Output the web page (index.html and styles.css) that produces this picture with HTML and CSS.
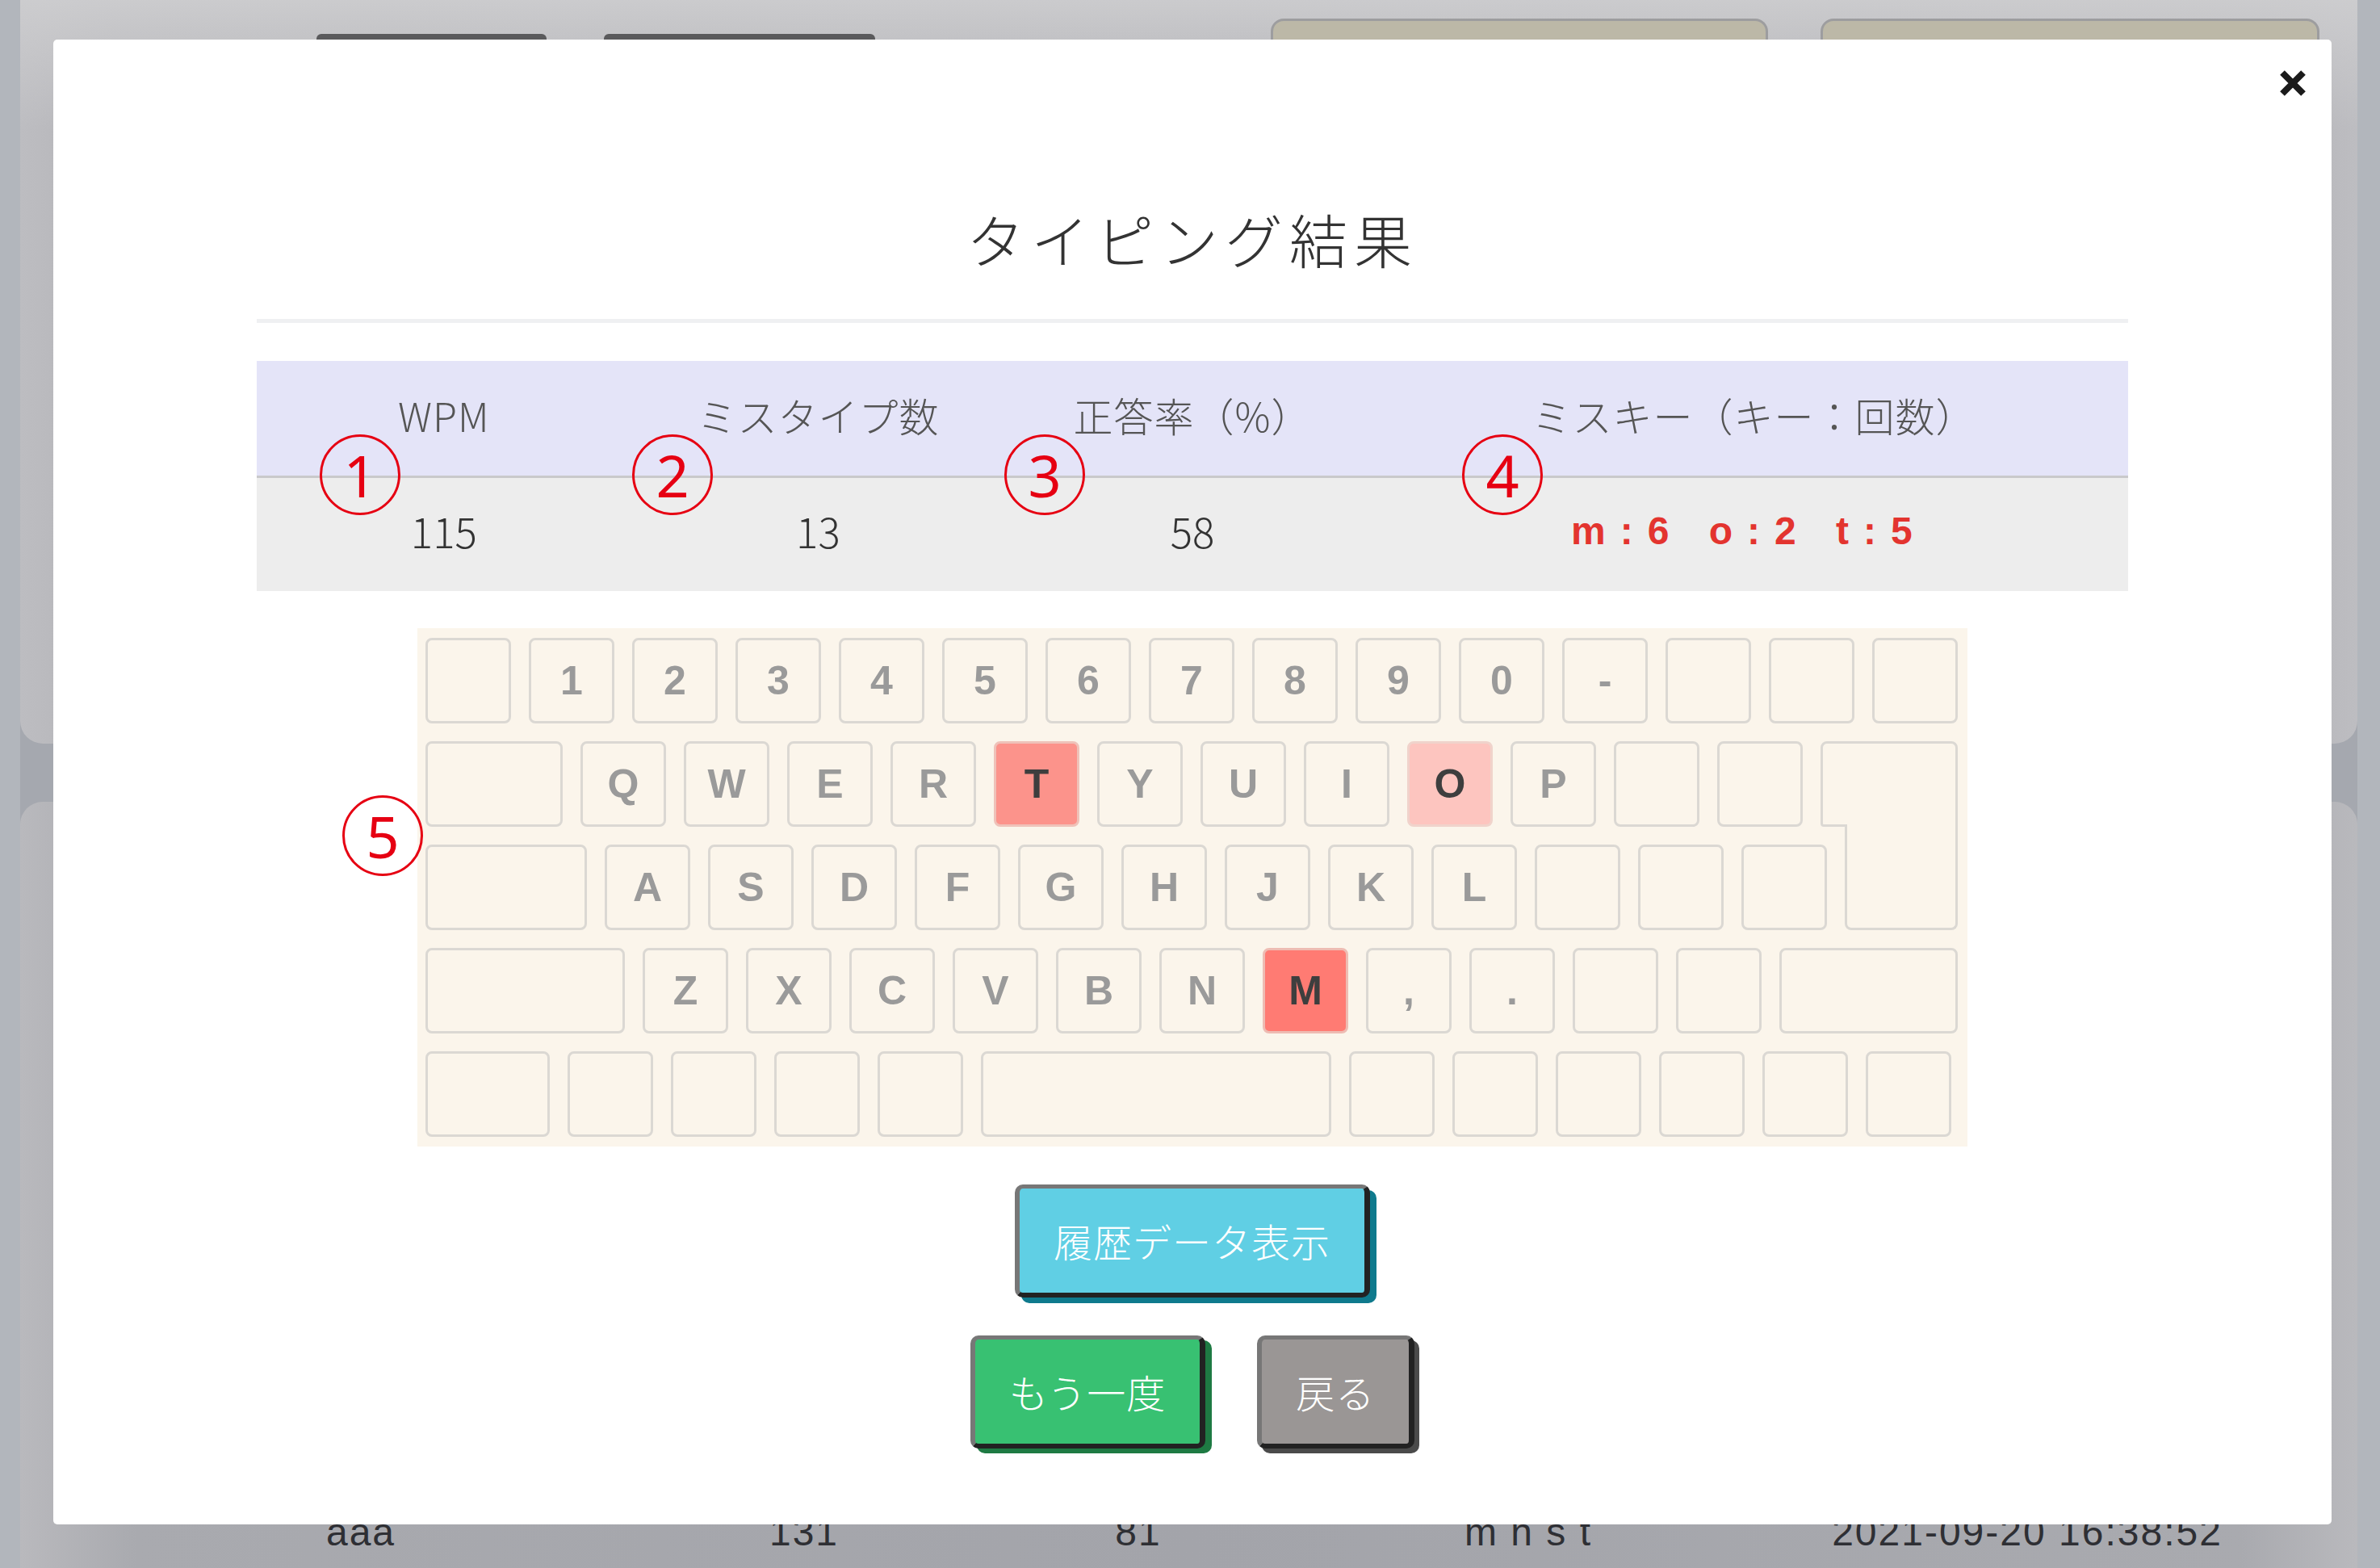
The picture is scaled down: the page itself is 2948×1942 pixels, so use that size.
FILE: index.html
```html
<!DOCTYPE html>
<html lang="ja">
<head>
<meta charset="utf-8">
<title>タイピング結果</title>
<link rel="stylesheet" href="styles.css">
</head>
<body>
<div class="page">
  <div class="card card-top">
    <div class="topbar">
      <span class="tb dark d1"></span>
      <span class="tb dark d2"></span>
      <span class="tb beige b1"></span>
      <span class="tb beige b2"></span>
    </div>
  </div>
  <div class="card card-bottom">
    <div class="hist-row">
      <span>aaa</span><span>131</span><span>81</span><span>m n s t</span><span>2021-09-20 16:38:52</span>
    </div>
  </div>
</div>

<div class="modal">
  <button class="close" aria-label="close">
    <svg width="36" height="36" viewBox="0 0 36 36"><path d="M5 5 L31 31 M31 5 L5 31" stroke="#1b1b1b" stroke-width="8" fill="none"/></svg>
  </button>

  <h1 class="title">タイピング結果</h1>
  <hr class="rule">

  <div class="stats">
    <div class="stats-head">
      <div>WPM</div>
      <div>ミスタイプ数</div>
      <div>正答率（%）</div>
      <div>ミスキー（キー：回数）</div>
    </div>
    <div class="stats-body">
      <div>115</div>
      <div>13</div>
      <div>58</div>
      <div class="miss">m:6 o:2 t:5</div>
    </div>
  </div>

  <div class="keyboard">
    <div class="kr">
      <span class="k"></span><span class="k">1</span><span class="k">2</span><span class="k">3</span><span class="k">4</span><span class="k">5</span><span class="k">6</span><span class="k">7</span><span class="k">8</span><span class="k">9</span><span class="k">0</span><span class="k">-</span><span class="k"></span><span class="k"></span><span class="k"></span>
    </div>
    <div class="kr">
      <span class="k tab"></span><span class="k">Q</span><span class="k">W</span><span class="k">E</span><span class="k">R</span><span class="k hl-t">T</span><span class="k">Y</span><span class="k">U</span><span class="k">I</span><span class="k hl-o">O</span><span class="k">P</span><span class="k"></span><span class="k"></span><span class="k enter-top"></span>
    </div>
    <div class="kr">
      <span class="k caps"></span><span class="k">A</span><span class="k">S</span><span class="k">D</span><span class="k">F</span><span class="k">G</span><span class="k">H</span><span class="k">J</span><span class="k">K</span><span class="k">L</span><span class="k"></span><span class="k"></span><span class="k"></span><span class="k enter-bot"></span>
    </div>
    <div class="kr">
      <span class="k lshift"></span><span class="k">Z</span><span class="k">X</span><span class="k">C</span><span class="k">V</span><span class="k">B</span><span class="k">N</span><span class="k hl-m">M</span><span class="k">,</span><span class="k">.</span><span class="k"></span><span class="k"></span><span class="k rshift"></span>
    </div>
    <div class="kr">
      <span class="k ctrl"></span><span class="k"></span><span class="k"></span><span class="k"></span><span class="k"></span><span class="k space"></span><span class="k"></span><span class="k"></span><span class="k"></span><span class="k"></span><span class="k"></span><span class="k"></span>
    </div>
  </div>

  <div class="actions">
    <button class="btn btn-info">履歴データ表示</button>
    <div class="btn-row">
      <button class="btn btn-success">もう一度</button>
      <button class="btn btn-back">戻る</button>
    </div>
  </div>

  <span class="mark m1">1</span>
  <span class="mark m2">2</span>
  <span class="mark m3">3</span>
  <span class="mark m4">4</span>
  <span class="mark m5">5</span>
</div>
</body>
</html>
```

FILE: styles.css
```css
* { box-sizing: border-box; }
html, body { margin: 0; padding: 0; }
body {
  width: 2948px;
  height: 1942px;
  overflow: hidden;
  position: relative;
  font-family: "Noto Sans CJK JP", "Noto Sans", sans-serif;
  background: #a6a9b0;
}

/* ---------- dimmed page behind the modal ---------- */
.page {
  height: 1942px;
  padding: 0 28px 0 25px;
  display: flex;
  flex-direction: column;
  gap: 72px;
  background: linear-gradient(90deg, #b2b6bc 0, #b2b6bc 25px, #a5a8af 25px, #a5a8af 2920px, #b2b6bc 2920px);
}
.card-top {
  height: 921px;
  border-radius: 0 0 28px 28px;
  background:
    linear-gradient(180deg, rgba(206,206,208,.9) 0, rgba(206,206,208,0) 160px),
    linear-gradient(90deg, #bdbdc1 0, #b3b3b7 4%, #aeaeb3 50%, #b3b3b7 96%, #bdbdc1 100%);
}
.card-bottom {
  flex: 1;
  border-radius: 28px 28px 0 0;
  padding-top: 875px;
  background: linear-gradient(90deg, #b9b9bd 0, #a9aaaf 5%, #a3a4aa 50%, #a9aaaf 95%, #b9b9bd 100%);
}
.topbar {
  display: flex;
  align-items: flex-start;
}
.tb { display: block; height: 60px; flex: none; }
.dark { background: #5a5a5c; border-radius: 6px 6px 0 0; margin-top: 42px; }
.d1 { width: 285px; margin-left: 367px; }
.d2 { width: 336px; margin-left: 71px; }
.beige {
  background: #bcb8a7;
  border: 3px solid #9d9d9f;
  border-bottom: none;
  border-radius: 16px 16px 0 0;
  margin-top: 23px;
}
.b1 { width: 616px; margin-left: 490px; }
.b2 { width: 618px; margin-left: 65px; }

.hist-row {
  display: grid;
  grid-template-columns: 844px 254px 574px 392px 844px;
  font: 48px/60px "Liberation Sans", Arial, sans-serif;
  letter-spacing: 2px;
  color: #2e2f34;
  text-align: center;
}

/* ---------- modal ---------- */
.modal {
  position: fixed;
  left: 66px;
  top: 49px;
  width: 2822px;
  height: 1839px;
  background: #fff;
  border-radius: 5px;
  padding: 200px 252px 0;
}
.close {
  position: absolute;
  top: 36px;
  right: 30px;
  width: 36px;
  height: 36px;
  padding: 0;
  border: none;
  background: transparent;
  display: block;
}
.close svg { display: block; }

.title {
  margin: 0;
  text-align: center;
  font-size: 72px;
  line-height: 92px;
  font-weight: 300;
  letter-spacing: 8px;
  color: #333;
}
.rule {
  border: none;
  height: 5px;
  background: #eff0f2;
  margin: 54px 0 47px;
}

.stats { width: 100%; }
.stats-head, .stats-body {
  display: grid;
  grid-template-columns: 1fr 1fr 1fr 2fr;
  align-items: center;
  text-align: center;
}
.stats-head {
  height: 145px;
  padding-bottom: 10px;
  background: #e4e4f8;
  border-bottom: 3px solid #c9c9cb;
  font-size: 49px;
  font-weight: 300;
  letter-spacing: 1px;
  color: #555;
}
.stats-body {
  height: 140px;
  padding-bottom: 10px;
  background: #ededed;
  font-size: 51px;
  font-weight: 300;
  color: #333;
}
.miss {
  font: bold 48px "Liberation Sans", Arial, sans-serif;
  letter-spacing: 18px;
  color: #e3342f;
  padding-right: 12px;
}

/* ---------- keyboard ---------- */
.keyboard {
  width: 1920px;
  margin: 46px auto 0;
  padding: 12px 11px 12px 10px;
  background: #fbf5eb;
  display: flex;
  flex-direction: column;
  gap: 22px;
}
.kr {
  display: flex;
  gap: 22px;
  align-items: flex-start;
}
.k {
  flex: none;
  width: 106px;
  height: 106px;
  border: 3px solid #dbd8d3;
  border-radius: 8px;
  background: #fbf5eb;
  display: flex;
  align-items: center;
  justify-content: center;
  font: bold 50px/1 "Liberation Sans", Arial, sans-serif;
  color: #9a9a9a;
}
.tab { width: 170px; }
.caps { width: 200px; }
.lshift { width: 247px; }
.rshift { width: 221px; }
.ctrl { width: 154px; }
.space { width: 434px; }
.enter-top {
  width: 170px;
  border-radius: 8px 8px 0 4px;
}
.enter-bot {
  width: 140px;
  height: 131px;
  margin-top: -25px;
  border-top: none;
  border-radius: 0 0 8px 8px;
  position: relative;
  z-index: 1;
}
.hl-t { background: #fc938b; border-color: #efc2b9; color: #3e3e3e; }
.hl-o { background: #fdc5bf; border-color: #f0d3cb; color: #3e3e3e; }
.hl-m { background: #ff7b73; border-color: #eebcb3; color: #3e3e3e; }

/* ---------- buttons ---------- */
.actions {
  margin-top: 47px;
  display: flex;
  flex-direction: column;
  align-items: center;
  gap: 47px;
}
.btn-row {
  display: flex;
  gap: 64px;
}
.btn {
  font-family: "Noto Sans CJK JP", "Noto Sans", sans-serif;
  font-size: 48px;
  font-weight: 300;
  letter-spacing: 1px;
  line-height: 75px;
  color: #fff;
  padding: 27px 42px;
  border-style: solid;
  border-width: 5px 7px 6px 6px;
  border-color: #777 #222 #222 #777;
  border-radius: 10px;
}
.btn-info { background: #60cfe4; box-shadow: 8px 7px 0 #0f7a8d; }
.btn-success { background: #38c172; box-shadow: 8px 6px 0 #1e7a43; }
.btn-back { background: #9a9695; box-shadow: 6px 6px 0 #4b4b4b; }

/* ---------- annotation marks ---------- */
.mark {
  position: absolute;
  width: 100px;
  height: 100px;
  border: 3px solid #e60012;
  border-radius: 50%;
  display: flex;
  align-items: center;
  justify-content: center;
  font: 400 72px/1 "Noto Sans", "Open Sans", sans-serif;
  color: #e60012;
}
.m1 { left: 330px; top: 489px; }
.m2 { left: 717px; top: 489px; }
.m3 { left: 1178px; top: 489px; }
.m4 { left: 1745px; top: 489px; }
.m5 { left: 358px; top: 936px; }
```
